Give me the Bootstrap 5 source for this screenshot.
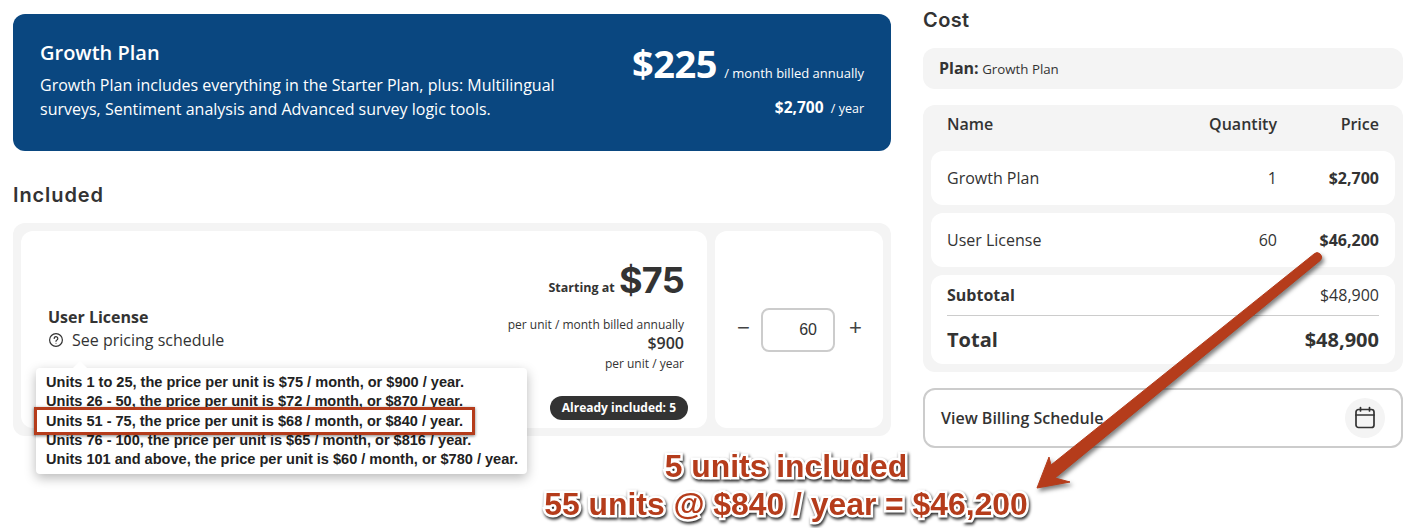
<!DOCTYPE html>
<html lang="en">
<head>
<meta charset="utf-8">
<title>Growth Plan</title>
<link href="https://cdn.jsdelivr.net/npm/bootstrap@5.3.0/dist/css/bootstrap.min.css" rel="stylesheet">
<style>
html,body{height:528px;overflow:hidden}
body{background:#fff;color:#333;font-family:"Open Sans","Noto Sans",sans-serif;font-size:16px;position:relative}
.shell{padding:14px 11px 0 13px;gap:32px}
.left-col{width:878px;flex:none}
.right-col{width:480px;flex:none}
.plan-hero{background:#0a4780;color:#fff;border-radius:12px;height:137px;padding:25px 27px 0 27px}
.plan-name{font-size:20px;font-weight:600;line-height:27px;margin:0 0 7px}
.plan-desc{line-height:24px;margin:0;width:540px}
.big-price{font-size:38px;font-weight:700;line-height:48px;letter-spacing:-.5px;margin-right:3px}
.tiny{font-size:13px}
.price-top{line-height:48px}
.year-line{font-size:15.5px;font-weight:700;margin-top:0;line-height:20px}
.year-line .tiny{font-size:12.5px}
.sect-title{font-family:Inter,"Noto Sans",sans-serif;font-size:20px;font-weight:600;line-height:27px;color:#333;margin:0;letter-spacing:.4px}
.sect-wide{margin-top:31px;letter-spacing:.9px}
.sect-up{margin-top:-7px}
.panel{background:#f4f4f4;border-radius:12px}
.tile{background:#fff;border-radius:12px}
.incl-panel{margin-top:14px;height:213px;padding:8px;gap:8px}
.incl-main{width:686px;flex:none;padding:0 23px 0 27px;position:relative}
.incl-qty{width:168px;flex:none;padding-top:77px;gap:0}
.lic-name{position:absolute;left:27px;top:75px;line-height:22px;font-weight:700}
.lic-link{position:absolute;left:27px;top:98px;line-height:22px;gap:8px;display:flex;align-items:center}
.start-line{padding-top:22px;line-height:54px;height:75px}
.start-line b{font-size:12.5px;font-weight:700;position:relative;top:-1px}
.start-line strong{font-family:Inter,"Noto Sans",sans-serif;font-size:36px;font-weight:700;letter-spacing:-.7px}
.pu{font-size:12px;line-height:16px;margin-top:11px}
.pu-price{font-size:16px;font-weight:600;line-height:20px}
.pu-year{font-size:12px;line-height:16px;margin-top:3px}
.inc-pill{position:absolute;right:19px;bottom:8px;background:#333;color:#fff;font-size:12px;font-weight:700;border-radius:12px;line-height:24px;padding:0 12px}
.qty-box{width:74px;height:44px;border:2px solid #ccc;border-radius:8px;font-family:"Liberation Sans",sans-serif;font-size:16px;line-height:40px;text-align:right;padding-right:16px;margin:0 14px 0 12px}
.qty-sign{font-size:22px;line-height:40px;color:#444;width:12px;text-align:center;font-family:"Liberation Sans",sans-serif}
.plan-bar{height:41px;margin-top:14px;padding:0 16px;line-height:41px;font-size:13.3px}
.plan-bar b{font-size:16px;font-weight:700}
.cost-panel{margin-top:16px;height:267px;padding:0 8px 8px}
.cost-head{height:46px;padding:0 16px;font-weight:600;line-height:38px;color:#333}
.c-name{flex:1 1 auto}
.c-qty{width:120px;text-align:right}
.c-price{width:102px;text-align:right}
.cost-row{height:54px;padding:0 16px;margin-bottom:8px;align-items:center}
.cost-row b{font-weight:700}
.sum-tile{height:89px;padding:0 16px}
.sub-line{height:41px;border-bottom:1px solid #ccc;font-size:16px}
.sub-line b{font-weight:700}
.tot-line{height:48px;font-size:20px;font-weight:700}
.bill-btn{margin-top:16px;height:60px;border:2px solid #ccc;border-radius:12px;padding:0 16px;font-weight:600;color:#333}
.cal-disc{width:40px;height:40px;border-radius:50%;background:#f4f4f4}
.price-pop{position:absolute;left:36px;top:368px;width:491px;height:106px;background:#fff;border-radius:4px;box-shadow:0 4px 12px rgba(0,0,0,.28);padding:5px 0 0 10px;font-family:"Liberation Sans",sans-serif;font-size:14.55px;font-weight:700;line-height:19.3px;color:#222;white-space:nowrap}
.price-pop::before{content:"";position:absolute;left:36px;top:-7px;border:8px solid transparent;border-top:0;border-bottom:8px solid #fff}
.pick-box{position:absolute;left:34px;top:407px;width:441px;height:28px;border:3px solid #b53c1b;box-shadow:0 1px 3px rgba(0,0,0,.5)}
.over-arrow{position:absolute;left:0;top:0;filter:drop-shadow(2px 3px 2px rgba(0,0,0,.5))}
.note-text{position:absolute;left:499px;top:447px;width:574px;text-align:center;font-family:"Liberation Sans",sans-serif;font-weight:700;font-size:31.85px;line-height:38px;color:#b53c1b;-webkit-text-stroke:5px #fff;paint-order:stroke fill;filter:drop-shadow(1px 2px 1.5px rgba(0,0,0,.85))}
</style>
</head>
<body>
<div class="d-flex shell">
  <div class="left-col">
    <div class="plan-hero d-flex justify-content-between">
      <div>
        <h2 class="plan-name">Growth Plan</h2>
        <p class="plan-desc">Growth Plan includes everything in the Starter Plan, plus: Multilingual surveys, Sentiment analysis and Advanced survey logic tools.</p>
      </div>
      <div class="text-end">
        <div class="price-top"><span class="big-price">$225</span> <span class="tiny">/ month billed annually</span></div>
        <div class="year-line">$2,700 <span class="tiny fw-normal">&nbsp;/ year</span></div>
      </div>
    </div>
    <h3 class="sect-title sect-wide">Included</h3>
    <div class="panel incl-panel d-flex">
      <div class="tile incl-main text-end">
        <div class="lic-name">User License</div>
        <div class="lic-link">
          <svg width="16" height="16" viewBox="0 0 16 16" fill="none" stroke="#333" stroke-width="1.2" aria-hidden="true"><circle cx="8" cy="8" r="6.4"/><path d="M6.2 6.4a1.8 1.8 0 1 1 2.7 1.6c-.6.3-.9.7-.9 1.3" stroke-linecap="round"/><circle cx="8" cy="11.2" r=".5" fill="#333" stroke="none"/></svg>
          <span>See pricing schedule</span>
        </div>
        <div class="start-line"><b>Starting at</b> <strong>$75</strong></div>
        <div class="pu">per unit / month billed annually</div>
        <div class="pu-price">$900</div>
        <div class="pu-year">per unit / year</div>
        <span class="inc-pill">Already included: 5</span>
      </div>
      <div class="tile incl-qty d-flex justify-content-center align-items-start">
        <span class="qty-sign">&minus;</span>
        <div class="qty-box">60</div>
        <span class="qty-sign">+</span>
      </div>
    </div>
  </div>
  <div class="right-col">
    <h3 class="sect-title sect-up">Cost</h3>
    <div class="panel plan-bar"><b>Plan:</b> Growth Plan</div>
    <div class="panel cost-panel">
      <div class="cost-head d-flex"><span class="c-name">Name</span><span class="c-qty">Quantity</span><span class="c-price">Price</span></div>
      <div class="tile cost-row d-flex"><span class="c-name">Growth Plan</span><span class="c-qty">1</span><b class="c-price">$2,700</b></div>
      <div class="tile cost-row d-flex"><span class="c-name">User License</span><span class="c-qty">60</span><b class="c-price">$46,200</b></div>
      <div class="tile sum-tile">
        <div class="sub-line d-flex justify-content-between align-items-center"><b>Subtotal</b><span>$48,900</span></div>
        <div class="tot-line d-flex justify-content-between align-items-center"><span>Total</span><span>$48,900</span></div>
      </div>
    </div>
    <div class="bill-btn d-flex justify-content-between align-items-center">
      <span>View Billing Schedule</span>
      <span class="cal-disc d-flex justify-content-center align-items-center">
        <svg width="22" height="24" viewBox="0 0 22 24" fill="none" stroke="#333" stroke-width="1.7" stroke-linecap="round" aria-hidden="true"><rect x="2" y="3.5" width="18" height="18" rx="2.5"/><path d="M2 9h18M6.5 1.5v3.5M15.5 1.5v3.5"/></svg>
      </span>
    </div>
  </div>
</div>

<div class="price-pop">
  <div>Units 1 to 25, the price per unit is $75 / month, or $900 / year.</div>
  <div>Units 26 - 50, the price per unit is $72 / month, or $870 / year.</div>
  <div>Units 51 - 75, the price per unit is $68 / month, or $840 / year.</div>
  <div>Units 76 - 100, the price per unit is $65 / month, or $816 / year.</div>
  <div>Units 101 and above, the price per unit is $60 / month, or $780 / year.</div>
</div>
<div class="pick-box"></div>
<svg class="over-arrow" width="1414" height="528" viewBox="0 0 1414 528" aria-hidden="true">
  <path d="M1314 254a4.5 4.5 0 0 1 6.5 6.2L1055 478l15 4-33 6 12-31 2 8z" fill="#b53c1b" stroke="#b53c1b" stroke-width="1" stroke-linejoin="round"/>
</svg>
<div class="note-text">5 units included<br>55 units @ $840 / year = $46,200</div>
<script src="https://cdn.jsdelivr.net/npm/bootstrap@5.3.0/dist/js/bootstrap.bundle.min.js"></script>
</body>
</html>
